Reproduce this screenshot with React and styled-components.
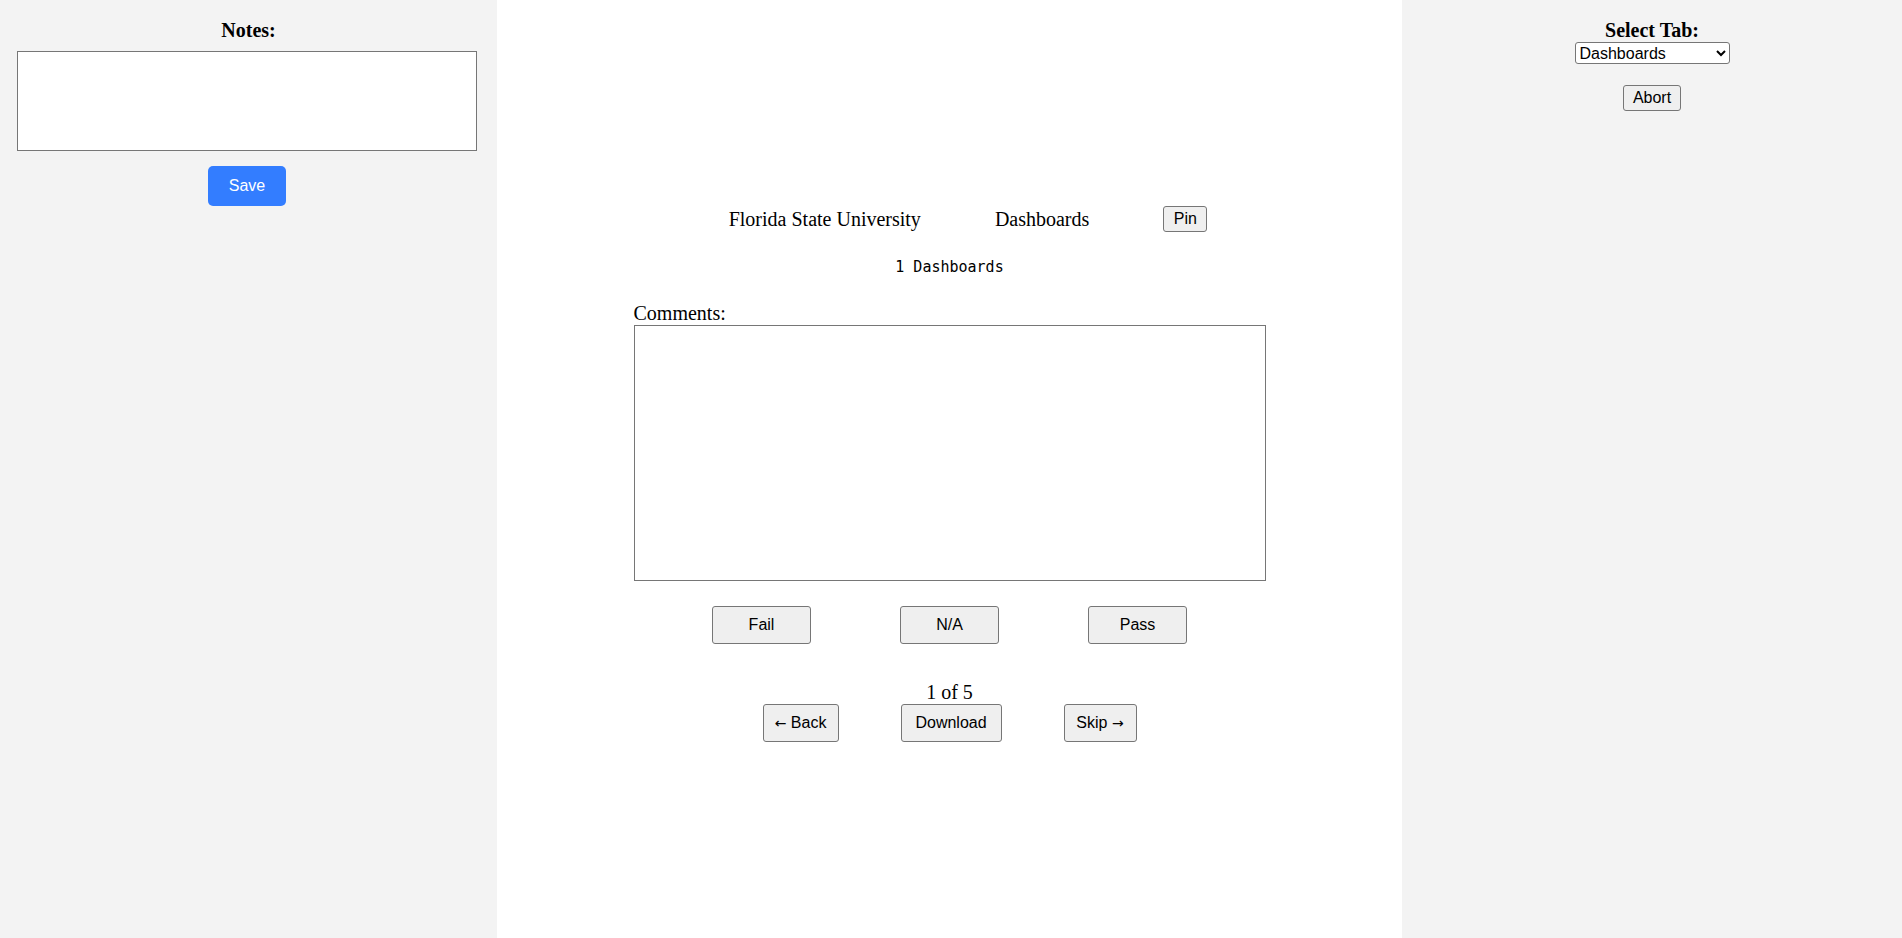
import React, { useState } from 'react';
import styled, { createGlobalStyle } from 'styled-components';

const GlobalStyle = createGlobalStyle`
  html, body {
    margin: 0;
    padding: 0;
  }
  body {
    font-family: "Liberation Serif", "Times New Roman", serif;
    color: #000;
  }
`;

const Page = styled.div`
  display: flex;
  height: 100vh;
  min-height: 938px;
`;

const Sidebar = styled.aside`
  width: ${(p) => p.$w}px;
  flex-shrink: 0;
  background-color: #f3f3f3;
  display: flex;
  flex-direction: column;
  align-items: center;
`;

const SideTitle = styled.h3`
  font-size: 20px;
  font-weight: bold;
  line-height: 22px;
  margin: 19px 0 ${(p) => p.$mb || 0}px;
  text-align: center;
`;

const NotesArea = styled.textarea`
  box-sizing: border-box;
  width: 460px;
  height: 100px;
  margin: 0 3px 0 0;
  border: 1px solid #767676;
  border-radius: 0;
  background: #fff;
  resize: none;
  font-family: "Liberation Mono", monospace;
`;

const SaveButton = styled.button`
  margin: 15px 3px 0 0;
  width: 78px;
  height: 40px;
  border: none;
  border-radius: 5px;
  background-color: #337dff;
  color: #fff;
  font-family: "Liberation Sans", Arial, sans-serif;
  font-size: 16px;
  cursor: pointer;
`;

const TabSelect = styled.select`
  box-sizing: border-box;
  width: 155px;
  height: 22px;
  margin-top: 1px;
  font-family: "Liberation Sans", Arial, sans-serif;
  font-size: 16px;
  border: 1px solid #767676;
  border-radius: 3px;
  background: #fff;
  color: #000;
`;

const Button = styled.button`
  box-sizing: border-box;
  width: ${(p) => p.$w}px;
  height: ${(p) => p.$h}px;
  margin-top: ${(p) => p.$mt || 0}px;
  padding: 0;
  border: 1px solid #767676;
  border-radius: 3px;
  background-color: #efefef;
  color: #000;
  font-family: "Liberation Sans", Arial, sans-serif;
  font-size: 16px;
  cursor: pointer;
`;

const Arrow = styled.span`
  font-family: "DejaVu Sans", sans-serif;
  font-size: 14px;
`;

const Main = styled.main`
  flex: 1;
  background: #fff;
  display: flex;
  flex-direction: column;
  align-items: center;
  padding-top: 206px;
`;

const InfoRow = styled.div`
  display: flex;
  align-items: center;
  gap: 74px;
  height: 26px;
  margin-left: 37px;
  font-size: 20px;
`;

const Count = styled.div`
  margin-top: 27px;
  font-family: "DejaVu Sans Mono", "Liberation Mono", monospace;
  font-size: 15px;
  line-height: 16px;
`;

const CommentBox = styled.div`
  width: 632px;
  margin-top: 27px;
  display: flex;
  flex-direction: column;
`;

const CommentLabel = styled.label`
  font-size: 20px;
  line-height: 23px;
`;

const CommentArea = styled.textarea`
  box-sizing: border-box;
  width: 632px;
  height: 256px;
  margin: 0;
  border: 1px solid #767676;
  border-radius: 0;
  resize: none;
  font-family: "Liberation Mono", monospace;
`;

const ReviewGroup = styled.div`
  display: flex;
  flex-direction: column;
  align-items: center;
`;

const ButtonRow = styled.div`
  display: flex;
  gap: ${(p) => p.$gap}px;
  margin-top: ${(p) => p.$mt || 0}px;
`;

const Progress = styled.div`
  margin-top: 37px;
  font-size: 20px;
  line-height: 22px;
`;

const App = () => {
  const [tab, setTab] = useState('Dashboards');

  return (
    <>
      <GlobalStyle />
      <Page>
        <Sidebar $w={497}>
          <SideTitle $mb={10}>Notes:</SideTitle>
          <NotesArea />
          <SaveButton>Save</SaveButton>
        </Sidebar>

        <Main>
          <InfoRow>
            <span>Florida State University</span>
            <span>Dashboards</span>
            <Button $w={44} $h={26}>Pin</Button>
          </InfoRow>
          <Count>1 Dashboards</Count>
          <CommentBox>
            <CommentLabel htmlFor="comments">Comments:</CommentLabel>
            <CommentArea id="comments" />
          </CommentBox>
          <ReviewGroup>
            <ButtonRow $gap={89} $mt={25}>
              <Button $w={99} $h={38}>Fail</Button>
              <Button $w={99} $h={38}>N/A</Button>
              <Button $w={99} $h={38}>Pass</Button>
            </ButtonRow>
            <Progress>1 of 5</Progress>
            <ButtonRow $gap={62} $mt={1}>
              <Button $w={76} $h={38}><Arrow>←</Arrow> Back</Button>
              <Button $w={101} $h={38}>Download</Button>
              <Button $w={73} $h={38}>Skip <Arrow>→</Arrow></Button>
            </ButtonRow>
          </ReviewGroup>
        </Main>

        <Sidebar $w={500}>
          <SideTitle>Select Tab:</SideTitle>
          <TabSelect value={tab} onChange={(e) => setTab(e.target.value)}>
            <option>Dashboards</option>
            <option>Reports</option>
            <option>Settings</option>
          </TabSelect>
          <Button $w={58} $h={26} $mt={21}>Abort</Button>
        </Sidebar>
      </Page>
    </>
  );
};

export default App;
